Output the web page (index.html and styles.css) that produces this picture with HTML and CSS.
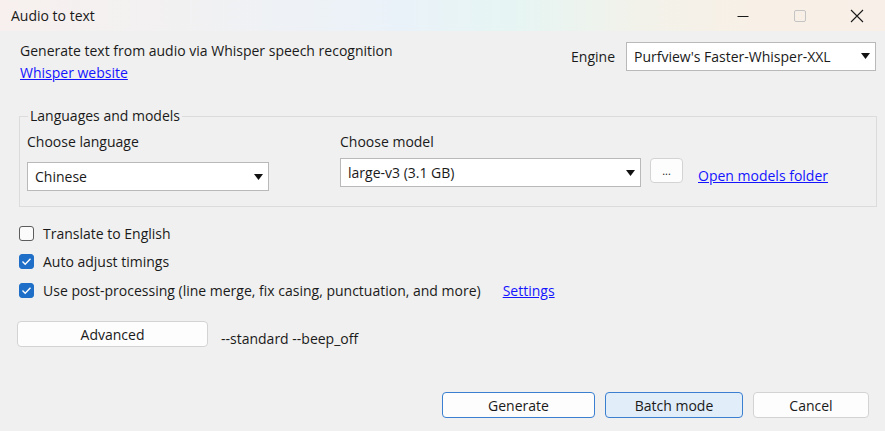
FILE: index.html
```html
<!DOCTYPE html>
<html>
<head>
<meta charset="utf-8">
<link rel="stylesheet" href="styles.css">
</head>
<body>
<div class="window">
  <div class="titlebar">
    <span class="title">Audio to text</span>
    <div class="controls">
      <span class="ctl"><svg width="12" height="12" viewBox="0 0 12 12"><path d="M0.5 6.5H11.5" stroke="#1a1a1a" stroke-width="1"/></svg></span>
      <span class="ctl"><svg width="12" height="12" viewBox="0 0 12 12"><rect x="0.5" y="0.5" width="11" height="11" rx="1.5" fill="none" stroke="#c4c4c4" stroke-width="1"/></svg></span>
      <span class="ctl"><svg width="14" height="14" viewBox="0 0 14 14"><path d="M1 1L13 13M13 1L1 13" stroke="#1a1a1a" stroke-width="1.1"/></svg></span>
    </div>
  </div>
  <div class="content">
    <div class="header">
      <div class="intro">
        <div>Generate text from audio via Whisper speech recognition</div>
        <a class="link" href="#">Whisper website</a>
      </div>
      <div class="engine">
        <span>Engine</span>
        <div class="combo combo-engine"><span>Purfview's Faster-Whisper-XXL</span><svg class="arrow" width="9" height="6" viewBox="0 0 9 6"><path d="M0 0H9L4.5 6Z" fill="#111"/></svg></div>
      </div>
    </div>
    <fieldset class="group">
      <legend>Languages and models</legend>
      <div class="col col-lang">
        <div class="label">Choose language</div>
        <div class="combo combo-lang"><span>Chinese</span><svg class="arrow" width="9" height="6" viewBox="0 0 9 6"><path d="M0 0H9L4.5 6Z" fill="#111"/></svg></div>
      </div>
      <div class="col col-model">
        <div class="label">Choose model</div>
        <div class="model-row">
          <div class="combo combo-model"><span>large-v3 (3.1 GB)</span><svg class="arrow" width="9" height="6" viewBox="0 0 9 6"><path d="M0 0H9L4.5 6Z" fill="#111"/></svg></div>
          <button class="btn btn-dots">...</button>
          <a class="link folder-link" href="#">Open models folder</a>
        </div>
      </div>
    </fieldset>
    <div class="checks">
      <label class="check"><span class="box"></span>Translate to English</label>
      <label class="check"><span class="box on"><svg width="11" height="9" viewBox="0 0 11 9"><path d="M1.5 4.6L4.2 7.2L9.5 1.8" fill="none" stroke="#fff" stroke-width="1.4"/></svg></span>Auto adjust timings</label>
      <label class="check"><span class="box on"><svg width="11" height="9" viewBox="0 0 11 9"><path d="M1.5 4.6L4.2 7.2L9.5 1.8" fill="none" stroke="#fff" stroke-width="1.4"/></svg></span>Use post-processing (line merge, fix casing, punctuation, and more)<a class="link settings" href="#">Settings</a></label>
    </div>
    <div class="advanced-row">
      <button class="btn btn-advanced">Advanced</button>
      <span class="params">--standard --beep_off</span>
    </div>
    <div class="footer">
      <button class="btn btn-generate">Generate</button>
      <button class="btn btn-batch">Batch mode</button>
      <button class="btn btn-cancel">Cancel</button>
    </div>
  </div>
</div>
</body>
</html>
```

FILE: styles.css
```css
* { box-sizing: border-box; }
html, body { margin: 0; padding: 0; }
body {
  width: 885px;
  height: 431px;
  overflow: hidden;
  background: #f0f0f0;
  font-family: "Open Sans", "Noto Sans", sans-serif;
  font-size: 14px;
  line-height: 19px;
  color: #1a1a1a;
}
.window { display: flex; flex-direction: column; height: 431px; }
.titlebar {
  height: 31px;
  display: flex;
  align-items: center;
  justify-content: space-between;
  background: linear-gradient(90deg, #f7f0ee 0%, #f2f1f2 20%, #eaf2f9 45%, #e6f5f3 58%, #f2f2ea 72%, #f8f0e6 85%, #f8efe8 100%);
}
.title { padding-left: 11px; font-size: 14px; color: #1a1a1a; }
.controls { display: flex; height: 31px; }
.ctl { width: 57px; display: flex; align-items: center; justify-content: center; }
.content { flex: 1; display: flex; flex-direction: column; padding: 0 9px 13px 17px; }
.header { display: flex; justify-content: space-between; padding-top: 9px; padding-left: 3px; }
.intro { line-height: 22px; }
.link { color: #1414ff; text-decoration: underline; }
.engine { display: flex; align-items: center; gap: 11px; margin-top: 2px; height: 28px; align-self: flex-start; }
.combo {
  background: #fff;
  border: 1px solid #b9b9b9;
  display: flex;
  align-items: center;
  justify-content: space-between;
  padding: 0 5px 0 7px;
  color: #1a1a1a;
}
.arrow { flex: none; }
.combo-engine { width: 250px; height: 29px; }
.group {
  margin: 24px 0 0 2px;
  width: 858px;
  height: 99px;
  border: 1px solid #dcdcdc;
  border-radius: 0;
  padding: 0 0 0 7px;
  display: flex;
  min-width: 0;
}
.group legend { padding: 0 2px; margin-left: 1px; line-height: 16px; }
.col { display: flex; flex-direction: column; }
.col-lang { width: 313px; }
.label { line-height: 20px; margin-top: 8px; }
.combo-lang { width: 242px; height: 29px; margin-top: 10px; }
.model-row { display: flex; align-items: flex-start; margin-top: 6px; }
.combo-model { width: 301px; height: 29px; }
.btn {
  font-family: inherit;
  font-size: 14px;
  color: #1a1a1a;
  background: #fdfdfd;
  border: 1px solid #d3d3d3;
  border-radius: 4px;
  padding: 0;
}
.btn-dots { width: 33px; height: 25px; margin-left: 9px; font-size: 11px; line-height: 18px; }
.folder-link { margin-left: 15px; margin-top: 8px; }
.checks { display: flex; flex-direction: column; margin-top: 12px; padding-left: 2px; }
.check { display: flex; align-items: center; height: 28.5px; }
.box {
  width: 15px; height: 15px;
  border: 1px solid #5c5c5c;
  border-radius: 3px;
  background: #fbfbfb;
  margin-right: 9px;
  display: flex; align-items: center; justify-content: center;
}
.box.on { background: #1f6fc8; border-color: #1f6fc8; }
.settings { margin-left: 22px; }
.advanced-row { display: flex; align-items: center; margin-top: 16px; }
.btn-advanced { width: 191px; height: 26px; }
.params { margin-left: 13px; margin-top: 8px; }
.footer { margin-top: auto; display: flex; justify-content: flex-end; gap: 10px; padding-right: 7px; }
.footer .btn { height: 26px; }
.btn-generate { width: 153px; border-color: #3a7fd0; background: #fdfdfd; }
.btn-batch { width: 138px; border-color: #3a7fd0; background: #e1edf8; }
.btn-cancel { width: 116px; }
```
